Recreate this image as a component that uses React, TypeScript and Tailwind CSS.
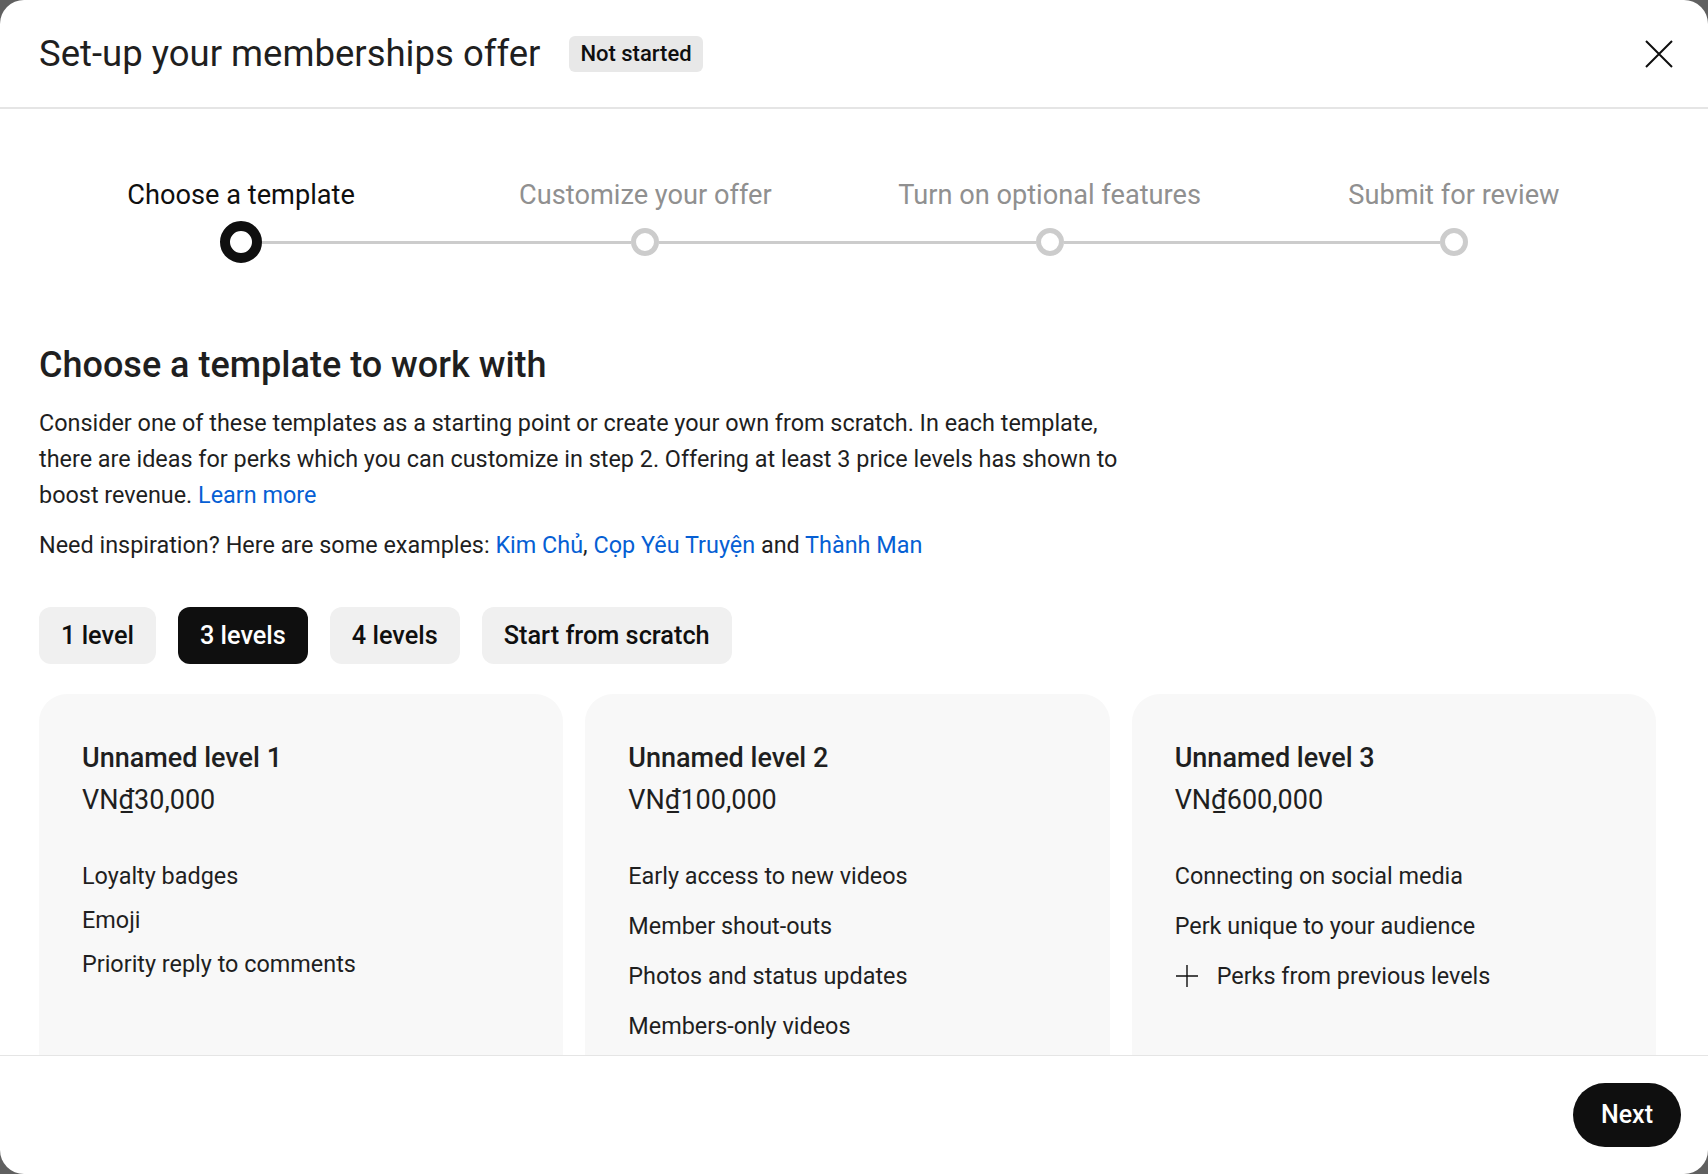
const steps = ['Choose a template', 'Customize your offer', 'Turn on optional features', 'Submit for review']

const chips = ['1 level', '3 levels', '4 levels', 'Start from scratch']

const levels = [
  { name: 'Unnamed level 1', price: 'VN₫30,000', perks: ['Loyalty badges', 'Emoji', 'Priority reply to comments'], gap: 'gap-[12px]', plus: false },
  { name: 'Unnamed level 2', price: 'VN₫100,000', perks: ['Early access to new videos', 'Member shout-outs', 'Photos and status updates', 'Members-only videos'], gap: 'gap-[18px]', plus: false },
  { name: 'Unnamed level 3', price: 'VN₫600,000', perks: ['Connecting on social media', 'Perk unique to your audience'], gap: 'gap-[18px]', plus: true },
]

const CloseIcon = () => (
  <svg width="28" height="28" viewBox="0 0 28 28" fill="none" stroke="#0f0f0f" strokeWidth="2">
    <path d="M1 1 L27 27 M27 1 L1 27" />
  </svg>
)

const PlusIcon = () => (
  <svg width="24" height="24" viewBox="0 0 24 24" fill="none" stroke="#0f0f0f" strokeWidth="1.4">
    <path d="M12 1 V23 M1 12 H23" />
  </svg>
)

const Stepper = () => {
  return <div className="grid grid-cols-4">
    {steps.map((s, i) => (
      <div key={s} className="flex flex-col items-center">
        <div className={`text-[27.2px] leading-[36px] ${i === 0 ? 'text-[#0f0f0f]' : 'text-[#909090]'}`}>{s}</div>
        <div className="mt-[8px] flex h-[42px] w-full items-center">
          <div className={`h-[3px] flex-1 ${i === 0 ? '' : 'bg-[#cccccc]'}`} />
          {i === 0
            ? <div className="h-[42px] w-[42px] rounded-full border-[10px] border-[#0f0f0f] bg-white" />
            : <div className="h-[28px] w-[28px] rounded-full border-[5px] border-[#cccccc] bg-white" />}
          <div className={`h-[3px] flex-1 ${i === steps.length - 1 ? '' : 'bg-[#cccccc]'}`} />
        </div>
      </div>
    ))}
  </div>
}

const App = () => {
  return <div className="h-screen w-screen overflow-hidden bg-[#606060]" style={{ fontFamily: 'Roboto, "Noto Sans", sans-serif' }}>
    <div className="flex h-full w-full flex-col overflow-hidden rounded-[24px] bg-white text-[#0f0f0f]">
      {/* header */}
      <div className="flex h-[109px] shrink-0 items-center border-b-2 border-[#e5e5e5] pl-[39px] pr-[35px]">
        <h1 className="text-[36.5px] leading-[48px] text-[#1f1f1f]">Set-up your memberships offer</h1>
        <span className="ml-[29px] rounded-[6px] bg-[#e8e8e8] px-[11px] py-[3px] text-[22px] font-medium leading-[30px]">Not started</span>
        <button className="ml-auto flex items-center justify-center">
          <CloseIcon />
        </button>
      </div>

      {/* body */}
      <div className="flex-1 overflow-hidden pl-[39px] pr-[52px] pt-[68px]">
        <Stepper />

        <h2 className="mt-[78px] text-[36px] font-medium leading-[48px] text-[#1f1f1f]">Choose a template to work with</h2>
        <p className="mt-[16px] max-w-[1100px] text-[23.4px] leading-[36px] text-[#1f1f1f]">
          Consider one of these templates as a starting point or create your own from scratch. In each template, there are ideas for perks which you can customize in step 2. Offering at least 3 price levels has shown to boost revenue. <a className="text-[#065fd4]">Learn more</a>
        </p>
        <p className="mt-[14px] text-[23.4px] leading-[36px] text-[#1f1f1f]">
          Need inspiration? Here are some examples: <a className="text-[#065fd4]">Kim Chủ</a>, <a className="text-[#065fd4]">Cọp Yêu Truyện</a> and <a className="text-[#065fd4]">Thành Man</a>
        </p>

        <div className="mt-[44px] flex gap-[22px]">
          {chips.map((c) => (
            <button key={c} className={`h-[57px] rounded-[12px] px-[22px] text-[25.3px] font-medium ${c === '3 levels' ? 'bg-[#0f0f0f] text-white' : 'bg-[#f0f0f0] text-[#0f0f0f]'}`}>{c}</button>
          ))}
        </div>

        <div className="mt-[30px] grid grid-cols-3 gap-[22px]">
          {levels.map((l) => (
            <div key={l.name} className="min-h-[460px] rounded-[28px] bg-[#f8f8f8] px-[43px] pt-[46px]">
              <div className="text-[27px] font-medium leading-[36px] text-[#1f1f1f]">{l.name}</div>
              <div className="mt-[6px] text-[27px] leading-[36px] text-[#1f1f1f]">{l.price}</div>
              <ul className={`mt-[42px] flex flex-col ${l.gap}`}>
                {l.perks.map((p) => (
                  <li key={p} className="text-[23.4px] leading-[32px] text-[#1f1f1f]">{p}</li>
                ))}
                {l.plus && (
                  <li className="flex items-center gap-[18px] text-[23.4px] leading-[32px] text-[#1f1f1f]">
                    <PlusIcon />
                    Perks from previous levels
                  </li>
                )}
              </ul>
            </div>
          ))}
        </div>
      </div>

      {/* footer */}
      <div className="flex h-[119px] shrink-0 items-center justify-end border-t border-[#e5e5e5] pr-[27px]">
        <button className="h-[64px] rounded-full bg-[#0f0f0f] px-[28px] text-[25px] font-medium text-white">Next</button>
      </div>
    </div>
  </div>
}

export default App
